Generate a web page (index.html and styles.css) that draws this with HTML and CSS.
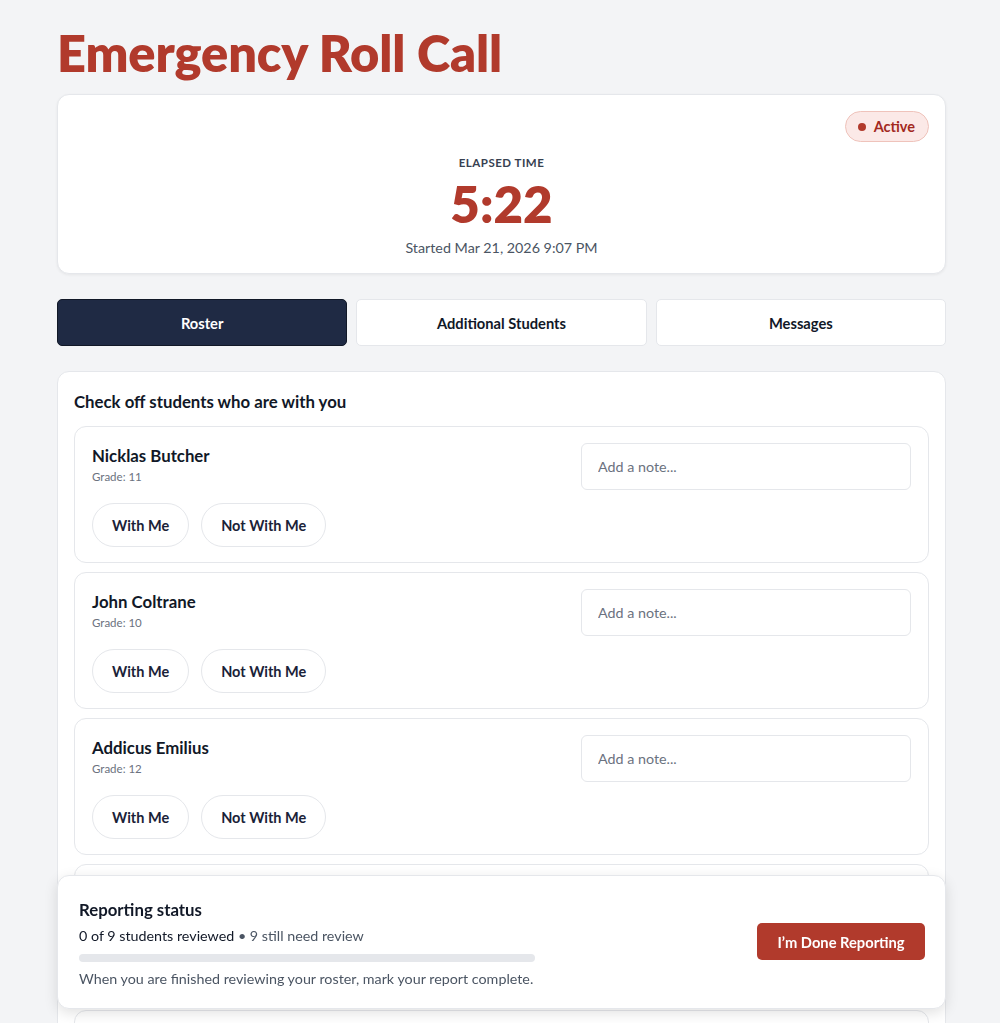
FILE: index.html
```html
<!DOCTYPE html>
<html>
<head>
<meta charset="utf-8">
<link rel="stylesheet" href="styles.css">
</head>
<body>
<div class="page">
  <h1 class="title">Emergency Roll Call</h1>

  <section class="timer-card">
    <div class="badge"><span class="dot"></span>Active</div>
    <div class="elapsed-label">ELAPSED TIME</div>
    <div class="elapsed">5:22</div>
    <div class="started">Started Mar 21, 2026 9:07 PM</div>
  </section>

  <nav class="tabs">
    <button class="tab active">Roster</button>
    <button class="tab">Additional Students</button>
    <button class="tab">Messages</button>
  </nav>

  <section class="roster">
    <h2 class="roster-title">Check off students who are with you</h2>
    <div class="student">
      <div class="info">
        <div class="name">Nicklas Butcher</div>
        <div class="grade">Grade: 11</div>
        <div class="actions">
          <button class="pill">With Me</button>
          <button class="pill">Not With Me</button>
        </div>
      </div>
      <input class="note" type="text" placeholder="Add a note...">
    </div>
    <div class="student">
      <div class="info">
        <div class="name">John Coltrane</div>
        <div class="grade">Grade: 10</div>
        <div class="actions">
          <button class="pill">With Me</button>
          <button class="pill">Not With Me</button>
        </div>
      </div>
      <input class="note" type="text" placeholder="Add a note...">
    </div>
    <div class="student">
      <div class="info">
        <div class="name">Addicus Emilius</div>
        <div class="grade">Grade: 12</div>
        <div class="actions">
          <button class="pill">With Me</button>
          <button class="pill">Not With Me</button>
        </div>
      </div>
      <input class="note" type="text" placeholder="Add a note...">
    </div>
    <div class="student">
      <div class="info">
        <div class="name">Maria Lopez</div>
        <div class="grade">Grade: 9</div>
        <div class="actions">
          <button class="pill">With Me</button>
          <button class="pill">Not With Me</button>
        </div>
      </div>
      <input class="note" type="text" placeholder="Add a note...">
    </div>
    <div class="student">
      <div class="info">
        <div class="name">Samuel Ortiz</div>
        <div class="grade">Grade: 11</div>
        <div class="actions">
          <button class="pill">With Me</button>
          <button class="pill">Not With Me</button>
        </div>
      </div>
      <input class="note" type="text" placeholder="Add a note...">
    </div>
  </section>
</div>

<aside class="status">
  <div class="status-main">
    <div class="status-title">Reporting status</div>
    <div class="status-count"><span class="strong">0 of 9 students reviewed</span> • 9 still need review</div>
    <div class="progress"><div class="progress-fill" style="width:0%"></div></div>
    <div class="status-note">When you are finished reviewing your roster, mark your report complete.</div>
  </div>
  <button class="done">I’m Done Reporting</button>
</aside>
</body>
</html>
```

FILE: styles.css
```css
* { box-sizing: border-box; }
html, body { margin: 0; padding: 0; }
body {
  background: #f3f4f6;
  font-family: "Lato", "Inter", "Liberation Sans", sans-serif;
  color: #111827;
  overflow: hidden;
}
.page {
  width: 889px;
  margin: 0 0 0 57px;
  padding-top: 26px;
}
.title {
  margin: 0 0 14px 0;
  font-size: 50.5px;
  line-height: 54px;
  font-weight: 800;
  color: #b13a2c;
  letter-spacing: -0.1px;
}
.timer-card {
  position: relative;
  background: #fff;
  border: 1px solid #e5e7eb;
  border-radius: 12px;
  box-shadow: 0 1px 3px rgba(0,0,0,0.06);
  height: 180px;
  display: flex;
  flex-direction: column;
  align-items: center;
  padding-top: 61px;
}
.badge {
  position: absolute;
  top: 16px;
  right: 16px;
  height: 31px;
  padding: 0 13px 0 12px;
  border-radius: 16px;
  background: #fbe9e7;
  border: 1px solid #efc3bb;
  color: #a3291e;
  font-weight: 700;
  font-size: 14.5px;
  display: flex;
  align-items: center;
  gap: 8px;
}
.dot { width: 8px; height: 8px; border-radius: 50%; background: #b13a2c; }
.elapsed-label {
  font-size: 11.5px;
  font-weight: 700;
  letter-spacing: 0.5px;
  color: #374151;
  line-height: 14px;
}
.elapsed {
  font-size: 51px;
  line-height: 52px;
  font-weight: 800;
  color: #b13a2c;
  margin-top: 8px;
}
.started {
  font-size: 14.3px;
  color: #4b5563;
  margin-top: 9px;
}
.tabs {
  display: grid;
  grid-template-columns: 1fr 1fr 1fr;
  gap: 9px;
  margin-top: 25px;
}
.tab {
  height: 47px;
  border: 1px solid #e5e7eb;
  background: #fff;
  border-radius: 5px;
  font-family: inherit;
  font-size: 14.7px;
  font-weight: 700;
  color: #111827;
}
.tab.active {
  background: #1f2a44;
  border-color: #111827;
  color: #fff;
}
.roster {
  margin-top: 25px;
  background: #fff;
  border: 1px solid #e5e7eb;
  border-radius: 12px;
  padding: 17px 16px 16px 16px;
  display: flex;
  flex-direction: column;
  gap: 9px;
}
.roster-title {
  margin: 3px 0 5px 0;
  font-size: 16.8px;
  line-height: 20px;
  font-weight: 700;
}
.student {
  border: 1px solid #e5e7eb;
  border-radius: 12px;
  height: 137px;
  padding: 16px 17px 0 17px;
  display: flex;
  justify-content: space-between;
  align-items: flex-start;
}
.info { padding-top: 2px; }
.name { font-size: 16.8px; font-weight: 700; line-height: 22px; }
.grade { font-size: 11.5px; color: #6b7280; margin-top: 3px; line-height: 14px; }
.actions { display: flex; gap: 12px; margin-top: 19px; }
.pill {
  height: 44px;
  padding: 0 19px;
  border-radius: 22px;
  border: 1px solid #e5e7eb;
  background: #fff;
  font-family: inherit;
  font-size: 14.5px;
  font-weight: 700;
  color: #1a2238;
}
.note {
  width: 330px;
  height: 47px;
  border: 1px solid #e5e7eb;
  border-radius: 6px;
  padding: 0 16px;
  font-family: inherit;
  font-size: 14.3px;
  color: #111827;
}
.note::placeholder { color: #6b7280; }
.status {
  position: fixed;
  left: 57px;
  width: 889px;
  bottom: 14px;
  height: 134px;
  background: #fff;
  border: 1px solid #e5e7eb;
  border-radius: 12px;
  box-shadow: 0 4px 14px rgba(0,0,0,0.12);
  padding: 24px 20px 0 21px;
  display: flex;
  justify-content: space-between;
  align-items: flex-start;
}
.status-title { font-size: 16.8px; font-weight: 700; line-height: 20px; }
.status-count { font-size: 14.3px; color: #4b5563; margin-top: 7px; line-height: 18px; }
.status-count .strong { color: #111827; }
.progress {
  width: 456px;
  height: 8px;
  border-radius: 4px;
  background: #e5e7eb;
  margin-top: 9px;
  overflow: hidden;
}
.progress-fill { height: 100%; background: #b13a2c; }
.status-note { font-size: 14.3px; color: #4b5563; margin-top: 8px; line-height: 18px; }
.done {
  margin-top: 23px;
  width: 168px;
  height: 37px;
  border: none;
  border-radius: 5px;
  background: #b13a2c;
  color: #fff;
  font-family: inherit;
  font-size: 14.7px;
  font-weight: 700;
}
```
